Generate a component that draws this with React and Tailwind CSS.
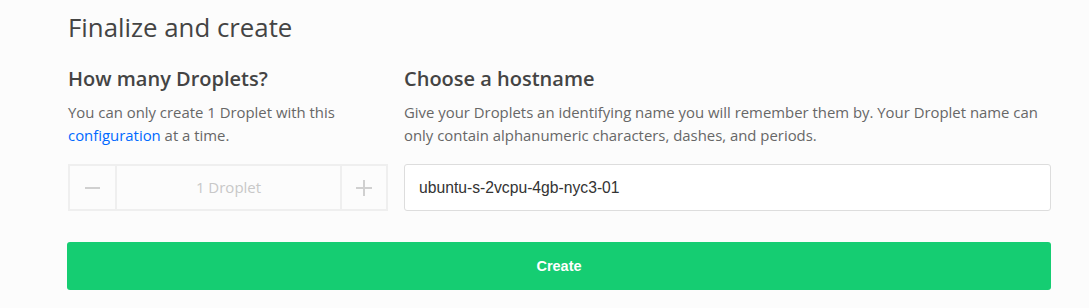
export default function App() {
  return (
    <div className="min-h-[308px] w-full bg-[#fcfcfc] font-['Open_Sans',sans-serif]">
      <div className="ml-[68px] w-[983px] pt-[11px]">
        <h1 className="text-[25.8px] leading-[32px] text-[#444] font-normal">Finalize and create</h1>
        <div className="mt-[24px] grid grid-cols-[320px_1fr] gap-x-[16px]">
          <div>
            <h2 className="text-[20px] leading-[24px] font-semibold text-[#444]">How many Droplets?</h2>
            <p className="mt-[10px] text-[14.9px] leading-[23px] text-[#676767]">
              You can only create 1 Droplet with this{" "}
              <span className="text-[#0069ff]">configuration</span> at a time.
            </p>
          </div>
          <div>
            <h2 className="text-[20px] leading-[24px] font-semibold text-[#444]">Choose a hostname</h2>
            <p className="mt-[10px] text-[14.9px] leading-[23px] text-[#676767]">
              Give your Droplets an identifying name you will remember them by. Your Droplet name can only contain alphanumeric characters, dashes, and periods.
            </p>
          </div>
          <div className="mt-[17px] flex h-[47px] border-2 border-[#efefef] bg-[#fcfcfc]">
            <div className="flex w-[47px] items-center justify-center border-r-2 border-[#efefef]">
              <div className="h-[2px] w-[15px] bg-[#d0d0d0]" />
            </div>
            <div className="flex flex-1 items-center justify-center text-[15px] text-[#c8c8c8]">1 Droplet</div>
            <div className="flex w-[46px] items-center justify-center border-l-2 border-[#efefef]">
              <div className="relative h-[16px] w-[16px]">
                <div className="absolute left-0 top-[7px] h-[2px] w-[16px] bg-[#d0d0d0]" />
                <div className="absolute left-[7px] top-0 h-[16px] w-[2px] bg-[#d0d0d0]" />
              </div>
            </div>
          </div>
          <div className="mt-[17px] flex h-[47px] items-center rounded-[3px] border border-[#dddddd] bg-white px-[14px] font-['Liberation_Sans',sans-serif] text-[15.7px] text-[#333]">
            ubuntu-s-2vcpu-4gb-nyc3-01
          </div>
        </div>
        <button className="mt-[31px] -ml-[1px] flex h-[48px] w-[984px] items-center justify-center rounded-[3px] bg-[#15cd72] pt-[2px] font-['Liberation_Sans',sans-serif] text-[14.5px] font-bold text-white">
          Create
        </button>
      </div>
    </div>
  );
}
